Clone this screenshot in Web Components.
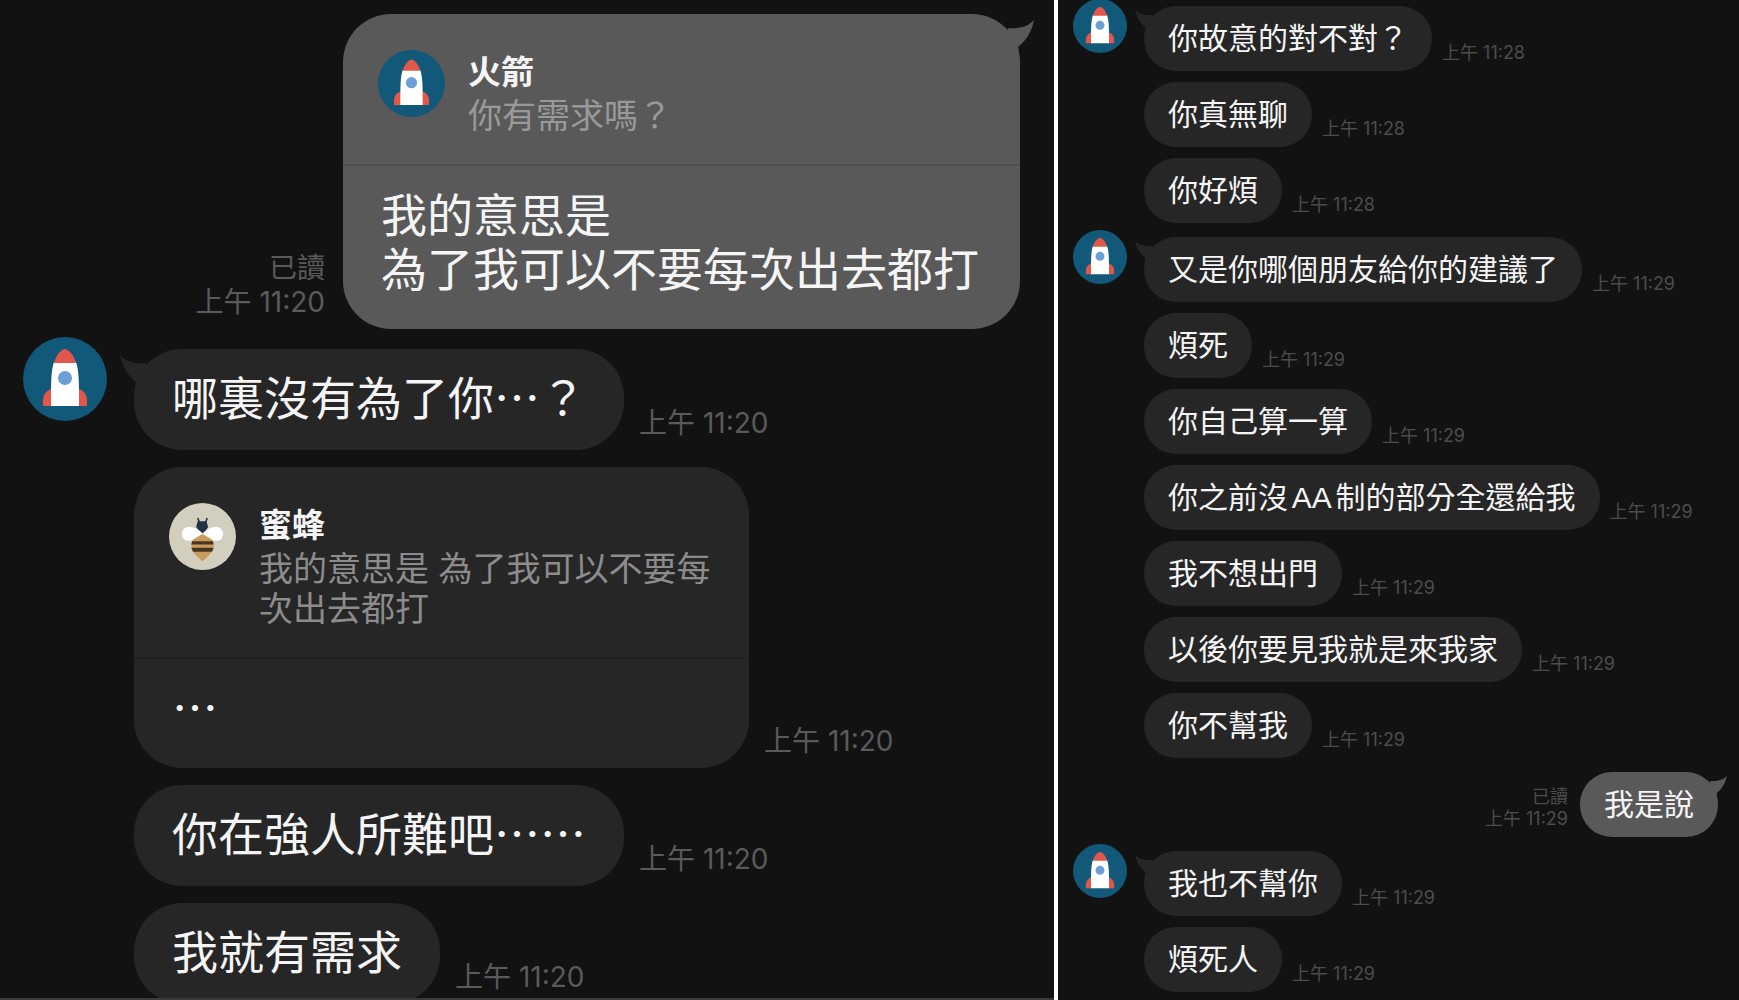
<!DOCTYPE html>
<html lang="zh-TW">
<head>
<meta charset="UTF-8">
<meta name="viewport" content="width=device-width, initial-scale=1.0">
<title>火箭</title>
<style>
  html {
    background: #121212;
  }
  body {
    margin: 0;
    color: #f5f5f5;
    font-family: "Liberation Sans", "Noto Sans CJK TC", sans-serif;
  }
</style>
</head>
<body>
<chat-screens>
  <chat-panel size="large" slot="main">
    <chat-group side="sent">
      <chat-message side="sent" tail read time="上午 11:20">
        <chat-quote slot="quote" side="sent" who="rocket" name="火箭">你有需求嗎？</chat-quote>
        我的意思是<br>為了我可以不要每次出去都打
      </chat-message>
    </chat-group>
    <chat-group>
      <chat-avatar slot="avatar" who="rocket"></chat-avatar>
      <chat-message tail time="上午 11:20">哪裏沒有為了你<span>…</span>？</chat-message>
      <chat-message time="上午 11:20">
        <chat-quote slot="quote" who="bee" name="蜜蜂">我的意思是 為了我可以不要每次出去都打</chat-quote>
        <span>…</span>
      </chat-message>
      <chat-message time="上午 11:20">你在強人所難吧<span>……</span></chat-message>
      <chat-message time="上午 11:20">我就有需求</chat-message>
    </chat-group>
  </chat-panel>
  <chat-panel size="small" slot="side">
    <chat-group>
      <chat-avatar slot="avatar" who="rocket"></chat-avatar>
      <chat-message tail time="上午 11:28">你故意的對不對？</chat-message>
      <chat-message time="上午 11:28">你真無聊</chat-message>
      <chat-message time="上午 11:28">你好煩</chat-message>
    </chat-group>
    <chat-group>
      <chat-avatar slot="avatar" who="rocket"></chat-avatar>
      <chat-message tail time="上午 11:29">又是你哪個朋友給你的建議了</chat-message>
      <chat-message time="上午 11:29">煩死</chat-message>
      <chat-message time="上午 11:29">你自己算一算</chat-message>
      <chat-message time="上午 11:29">你之前沒AA制的部分全還給我</chat-message>
      <chat-message time="上午 11:29">我不想出門</chat-message>
      <chat-message time="上午 11:29">以後你要見我就是來我家</chat-message>
      <chat-message time="上午 11:29">你不幫我</chat-message>
    </chat-group>
    <chat-group side="sent">
      <chat-message side="sent" tail read time="上午 11:29">我是說</chat-message>
    </chat-group>
    <chat-group>
      <chat-avatar slot="avatar" who="rocket"></chat-avatar>
      <chat-message tail time="上午 11:29">我也不幫你</chat-message>
      <chat-message time="上午 11:29">煩死人</chat-message>
    </chat-group>
  </chat-panel>
</chat-screens>

<script>
  class ChatScreens extends HTMLElement {
    connectedCallback() {
      this.attachShadow({ mode: 'open' });
      this.shadowRoot.innerHTML = `
        <style>
          :host {
            display: grid;
            grid-template-columns: 1054fr 681fr;
            gap: 4px;
            height: 100vh;
            overflow: hidden;
            background: #fff;
          }
        </style>
        <slot name="main"></slot>
        <slot name="side"></slot>
      `;
    }
  }

  // All sizes that differ between the two panels are set here as variables.
  class ChatPanel extends HTMLElement {
    connectedCallback() {
      this.attachShadow({ mode: 'open' });
      this.shadowRoot.innerHTML = `
        <style>
          :host {
            display: flex;
            flex-direction: column;
            gap: var(--group-gap);
            box-sizing: border-box;
            min-width: 0;
            overflow: hidden;
            background: #121212;
          }
          :host([size="large"]) {
            --group-gap: 20px;
            --row-gap: 17px;
            --avatar: 84px;
            --avatar-gap: 27px;
            --avatar-rise: 12px;
            --text: 46px;
            --line: 53px;
            --pad: 24px 38px;
            --radius: 48px;
            --time: 28px;
            --time-line: 34px;
            --time-gap: 15px;
            --time-gap-sent: 18px;
            --time-drop: 10px;
            --time-color: #5a5a5a;
            --tail-w: 28px;
            --tail-h: 36px;
            --tail-out: 14px;
            padding: 14px 34px 0 23px;
            border-bottom: 2px solid #3c393a;
          }
          :host([size="small"]) {
            --group-gap: 14px;
            --row-gap: 11px;
            --avatar: 54px;
            --avatar-gap: 17px;
            --avatar-rise: 7px;
            --text: 30px;
            --line: 35px;
            --pad: 15px 24px;
            --radius: 32px;
            --time: 18px;
            --time-line: 22px;
            --time-gap: 10px;
            --time-gap-sent: 12px;
            --time-drop: 7px;
            --time-color: #4c4c4c;
            --tail-w: 18px;
            --tail-h: 23px;
            --tail-out: 9px;
            padding: 6px 21px 0 15px;
          }
        </style>
        <slot></slot>
      `;
    }
  }

  class ChatGroup extends HTMLElement {
    connectedCallback() {
      this.attachShadow({ mode: 'open' });
      this.shadowRoot.innerHTML = `
        <style>
          :host {
            display: grid;
            grid-template-columns: var(--avatar) minmax(0, 1fr);
            column-gap: var(--avatar-gap);
          }
          :host([side="sent"]) {
            grid-template-columns: minmax(0, 1fr);
          }
          :host([side="sent"]) .avatar {
            display: none;
          }
          .avatar {
            height: var(--avatar);
            margin-top: calc(var(--avatar-rise) * -1);
          }
          .rows {
            display: flex;
            flex-direction: column;
            gap: var(--row-gap);
          }
        </style>
        <div class="avatar"><slot name="avatar"></slot></div>
        <div class="rows"><slot></slot></div>
      `;
    }
  }

  const AVATARS = {
    rocket: `
      <circle cx="42" cy="42" r="42" fill="#125878"/>
      <path d="M29 52C23 53 20 58 20 64V69H29Z" fill="#e2574c"/>
      <path d="M55 52C61 53 64 58 64 64V69H55Z" fill="#e2574c"/>
      <path d="M31 25H53C56 34 56 44 56 69H28C28 44 28 34 31 25Z" fill="#fff"/>
      <path d="M31 26C33 19 37 13 42 12C47 13 51 19 53 26Z" fill="#e2574c"/>
      <circle cx="42" cy="41" r="7" fill="#6c9fd6"/>`,
    bee: `
      <circle cx="42" cy="42" r="42" fill="#d2cfbe"/>
      <path d="M36 19L39 26M48 19L45 26" stroke="#1f3345" stroke-width="2"/>
      <path d="M36 23H47L49 30L46 35L42 38L38 35L34 30Z" fill="#1f3345"/>
      <path d="M42 39C38 32 30 30 24 30C14 31 14 45 22 47C30 48 38 45 42 39Z" fill="#fff"/>
      <path d="M42 39C46 32 54 30 60 30C70 31 70 45 62 47C54 48 46 45 42 39Z" fill="#fff"/>
      <path d="M42 39L53 45Q56 47 56 52C56 61 51 65 42 73C33 65 28 61 28 52Q28 47 31 45Z" fill="#c99c5c"/>
      <path d="M29 48H55L56 52H28ZM28 56H56L54 61H30Z" fill="#4a3420"/>`
  };

  class ChatAvatar extends HTMLElement {
    connectedCallback() {
      this.attachShadow({ mode: 'open' });
      this.shadowRoot.innerHTML = `
        <style>
          :host {
            display: block;
            width: var(--avatar);
            height: var(--avatar);
          }
          svg {
            display: block;
            width: 100%;
            height: 100%;
          }
        </style>
        <svg viewBox="0 0 84 84" aria-hidden="true">${AVATARS[this.getAttribute('who')]}</svg>
      `;
    }
  }

  class ChatQuote extends HTMLElement {
    connectedCallback() {
      this.attachShadow({ mode: 'open' });
      this.shadowRoot.innerHTML = `
        <style>
          :host {
            --avatar: 67px;
            display: grid;
            grid-template-columns: var(--avatar) minmax(0, 1fr);
            column-gap: 23px;
            padding: 36px 32px 28px 35px;
            border-bottom: 2px solid #212121;
            color: #8c8c8c;
            font-size: 34px;
            line-height: 40px;
          }
          :host([side="sent"]) {
            padding-bottom: 28px;
            border-bottom-color: #505050;
            color: #999;
          }
          strong {
            display: block;
            color: #f5f5f5;
            font-size: 33px;
            font-weight: 700;
            line-height: 46px;
          }
        </style>
        <chat-avatar who="${this.getAttribute('who')}"></chat-avatar>
        <div>
          <strong>${this.getAttribute('name')}</strong>
          <slot></slot>
        </div>
      `;
    }
  }

  class ChatMessage extends HTMLElement {
    connectedCallback() {
      this.attachShadow({ mode: 'open' });
      const quoted = this.querySelector('chat-quote') !== null;
      const tail = this.hasAttribute('tail')
        ? '<svg class="tail" viewBox="0 0 28 36" aria-hidden="true"><path d="M0 6C6 13 16 15 26 14L28 36L15 36L16 33C8 27 2 17 0 6Z"/></svg>'
        : '';
      this.shadowRoot.innerHTML = `
        <style>
          :host {
            --bubble: #262626;
            display: flex;
            align-items: flex-end;
            gap: var(--time-gap);
          }
          :host([side="sent"]) {
            --bubble: #595959;
            flex-direction: row-reverse;
            gap: var(--time-gap-sent);
          }
          .bubble {
            position: relative;
            border-radius: var(--radius);
            background: var(--bubble);
          }
          .quoted {
            max-width: 615px;
          }
          :host([side="sent"]) .quoted {
            max-width: 678px;
          }
          .body {
            padding: var(--pad);
            font-size: var(--text);
            line-height: var(--line);
            text-autospace: normal;
          }
          .quoted .body {
            padding: 23px 41px 32px 38px;
            line-height: 54px;
          }
          /* the ellipsis sits mid-height, as in the CJK font */
          ::slotted(span) {
            font-family: "Noto Sans CJK TC", sans-serif;
            line-height: 0;
          }
          .tail {
            position: absolute;
            top: 0;
            left: calc(var(--tail-out) * -1);
            width: var(--tail-w);
            height: var(--tail-h);
            fill: var(--bubble);
          }
          :host([side="sent"]) .tail {
            left: auto;
            right: calc(var(--tail-out) * -1);
            transform: scaleX(-1);
          }
          .meta {
            flex: none;
            margin-bottom: var(--time-drop);
            color: var(--time-color);
            font-family: Inter, "Noto Sans CJK TC", sans-serif;
            font-size: var(--time);
            line-height: var(--time-line);
          }
          :host([side="sent"]) .meta {
            text-align: right;
          }
          .meta span,
          .meta time {
            display: block;
          }
        </style>
        <div class="bubble${quoted ? ' quoted' : ''}">
          ${tail}
          <slot name="quote"></slot>
          <div class="body"><slot></slot></div>
        </div>
        <div class="meta">
          ${this.hasAttribute('read') ? '<span>已讀</span>' : ''}
          <time>${this.getAttribute('time')}</time>
        </div>
      `;
    }
  }

  customElements.define('chat-screens', ChatScreens);
  customElements.define('chat-panel', ChatPanel);
  customElements.define('chat-group', ChatGroup);
  customElements.define('chat-avatar', ChatAvatar);
  customElements.define('chat-quote', ChatQuote);
  customElements.define('chat-message', ChatMessage);
</script>
</body>
</html>
